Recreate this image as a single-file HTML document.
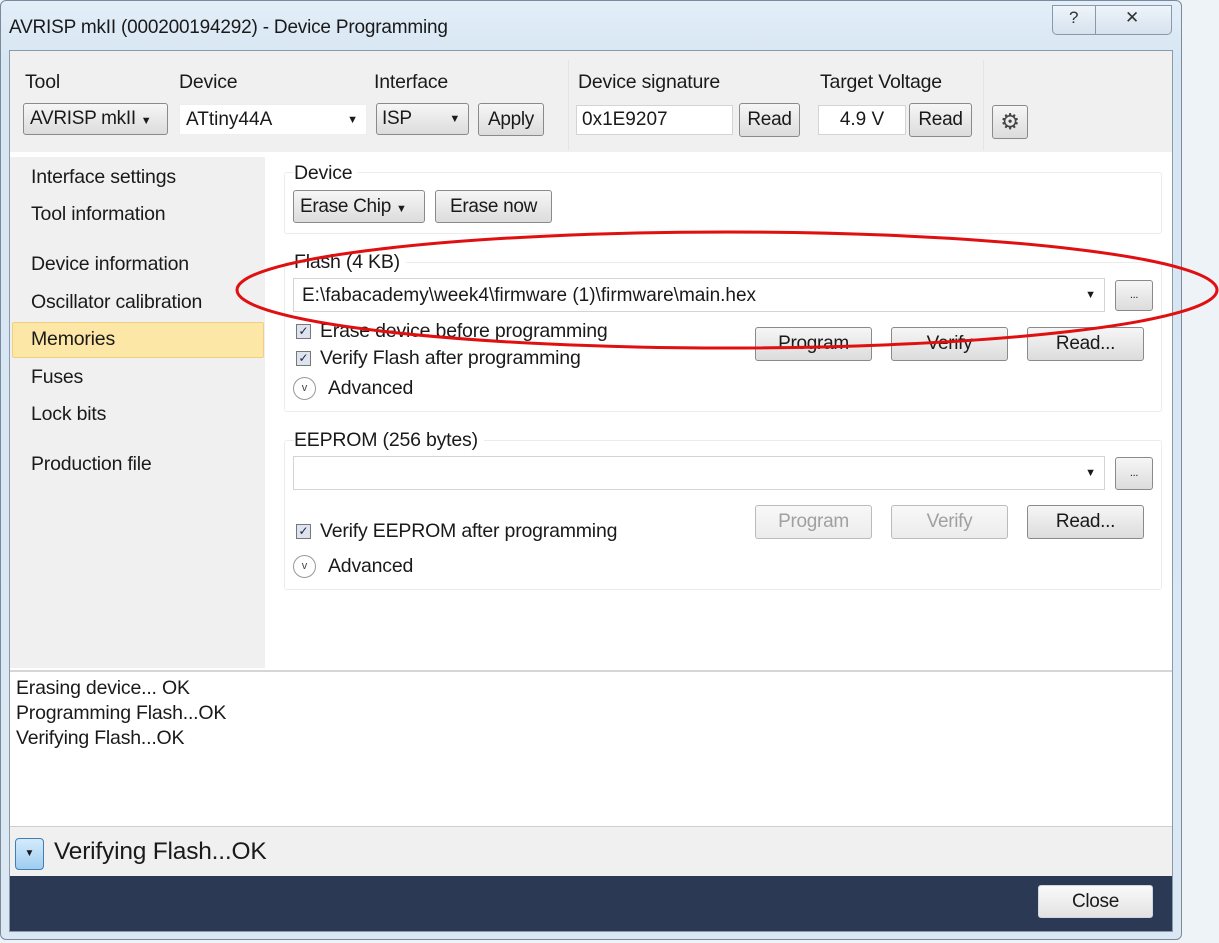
<!DOCTYPE html>
<html><head><meta charset="utf-8"><style>
*{box-sizing:border-box;margin:0;padding:0}
body{width:1219px;height:943px;overflow:hidden;background:#eef3f8;font-family:"Liberation Sans",sans-serif;color:#1a1a1a;position:relative;font-size:19.5px}
.a{position:absolute}
.t{position:absolute;white-space:nowrap;letter-spacing:-0.2px}
.btn{position:absolute;border:1px solid #8a8a8a;border-radius:3px;background:linear-gradient(#f6f6f6,#dcdcdc);font-size:19px;text-align:center;white-space:nowrap;letter-spacing:-0.3px}
.dis{color:#a0a0a0;border-color:#bbb;background:linear-gradient(#f8f8f8,#ececec)}
.inp{position:absolute;background:#fff;border:1px solid #d4d4d4;font-size:19px;white-space:nowrap}
.cb{position:absolute;width:15px;height:15px;border:1px solid #777;background:#dde4f0;font-size:12px;line-height:13px;text-align:center;color:#223}
.adv{position:absolute;width:23px;height:23px;border:1px solid #999;border-radius:50%;font-size:11px;text-align:center;line-height:21px;color:#444}
.grp{position:absolute;border:1px solid #ececec;border-radius:3px}
</style></head><body>
<div class="a" style="left:0;top:0;width:1182px;height:940px;border:1px solid #7a8a9a;border-radius:6px;background:linear-gradient(#e3eef8,#d7e6f3 60px,#dbe8f4)"></div>
<div class="t" style="left:9px;top:17px;font-size:19px">AVRISP mkII (000200194292) - Device Programming</div>
<div class="a" style="left:1052px;top:5px;width:120px;height:30px;border:1px solid #8a99aa;border-radius:0 0 5px 5px;background:linear-gradient(#eef4fa,#d6e2ee)"></div>
<div class="a" style="left:1095px;top:6px;width:1px;height:28px;background:#8a99aa"></div>
<div class="t" style="left:1069px;top:8px;font-size:17px;color:#333">?</div>
<div class="t" style="left:1125px;top:8px;font-size:17px;color:#333">✕</div>
<div class="a" style="left:9px;top:50px;width:1164px;height:882px;background:#fff;border:1px solid #8a9aaa"></div>
<div class="a" style="left:10px;top:51px;width:1162px;height:101px;background:#f0f0f0"></div>
<div class="t" style="left:25px;top:71px">Tool</div>
<div class="t" style="left:179px;top:71px">Device</div>
<div class="t" style="left:374px;top:71px">Interface</div>
<div class="t" style="left:578px;top:71px">Device signature</div>
<div class="t" style="left:820px;top:71px">Target Voltage</div>
<div class="a" style="left:983px;top:60px;width:1px;height:90px;background:#e4e4e4"></div>
<div class="a" style="left:568px;top:60px;width:1px;height:90px;background:#e4e4e4"></div>
<div class="btn" style="left:23px;top:103px;width:145px;height:32px;line-height:30px;text-align:left;padding-left:6px">AVRISP mkII <span style="font-size:11px">▼</span></div>
<div class="inp" style="left:179px;top:104px;width:188px;height:31px;line-height:30px;padding-left:6px;border-color:#eee">ATtiny44A<span style="position:absolute;right:8px;font-size:11px">▼</span></div>
<div class="btn" style="left:376px;top:103px;width:93px;height:32px;line-height:30px;text-align:left;padding-left:5px">ISP<span style="position:absolute;right:8px;font-size:11px">▼</span></div>
<div class="btn" style="left:478px;top:103px;width:66px;height:33px;line-height:31px">Apply</div>
<div class="inp" style="left:576px;top:105px;width:157px;height:30px;line-height:28px;padding-left:5px">0x1E9207</div>
<div class="btn" style="left:739px;top:103px;width:61px;height:34px;line-height:32px">Read</div>
<div class="inp" style="left:818px;top:105px;width:88px;height:30px;line-height:28px;text-align:center">4.9 V</div>
<div class="btn" style="left:909px;top:103px;width:63px;height:34px;line-height:32px">Read</div>
<div class="btn" style="left:992px;top:105px;width:36px;height:34px;line-height:32px;font-size:22px;color:#444">⚙</div>
<div class="a" style="left:10px;top:157px;width:255px;height:511px;background:#f0f0f0"></div>
<div class="a" style="left:12px;top:322px;width:252px;height:36px;background:#fde7a6;border:1px solid #f0d080;border-radius:2px"></div>
<div class="t" style="left:31px;top:166px">Interface settings</div>
<div class="t" style="left:31px;top:203px">Tool information</div>
<div class="t" style="left:31px;top:253px">Device information</div>
<div class="t" style="left:31px;top:291px">Oscillator calibration</div>
<div class="t" style="left:31px;top:328px">Memories</div>
<div class="t" style="left:31px;top:366px">Fuses</div>
<div class="t" style="left:31px;top:403px">Lock bits</div>
<div class="t" style="left:31px;top:453px">Production file</div>
<div class="grp" style="left:284px;top:172px;width:878px;height:62px"></div>
<div class="t" style="left:294px;top:162px;background:#fff;padding-right:6px">Device</div>
<div class="btn" style="left:293px;top:190px;width:132px;height:33px;line-height:31px;text-align:left;padding-left:6px">Erase Chip <span style="font-size:11px">▼</span></div>
<div class="btn" style="left:435px;top:190px;width:117px;height:33px;line-height:31px">Erase now</div>
<div class="grp" style="left:284px;top:262px;width:878px;height:150px"></div>
<div class="t" style="left:294px;top:251px;background:#fff;padding-right:6px">Flash (4 KB)</div>
<div class="inp" style="left:293px;top:278px;width:812px;height:34px;line-height:33px;padding-left:8px">E:\fabacademy\week4\firmware (1)\firmware\main.hex<span style="position:absolute;right:8px;font-size:11px">▼</span></div>
<div class="btn" style="left:1115px;top:280px;width:38px;height:31px;line-height:28px;font-size:11px">...</div>
<div class="cb" style="left:296px;top:324px">✓</div>
<div class="t" style="left:320px;top:320px">Erase device before programming</div>
<div class="cb" style="left:296px;top:351px">✓</div>
<div class="t" style="left:320px;top:347px">Verify Flash after programming</div>
<div class="adv" style="left:293px;top:377px">v</div>
<div class="t" style="left:328px;top:377px">Advanced</div>
<div class="btn" style="left:755px;top:327px;width:117px;height:34px;line-height:32px">Program</div>
<div class="btn" style="left:891px;top:327px;width:117px;height:34px;line-height:32px">Verify</div>
<div class="btn" style="left:1027px;top:327px;width:117px;height:34px;line-height:32px">Read...</div>
<div class="grp" style="left:284px;top:440px;width:878px;height:150px"></div>
<div class="t" style="left:294px;top:429px;background:#fff;padding-right:6px">EEPROM (256 bytes)</div>
<div class="inp" style="left:293px;top:456px;width:812px;height:34px"><span style="position:absolute;right:8px;top:10px;font-size:11px">▼</span></div>
<div class="btn" style="left:1115px;top:457px;width:38px;height:33px;line-height:30px;font-size:11px">...</div>
<div class="btn dis" style="left:755px;top:505px;width:117px;height:34px;line-height:32px">Program</div>
<div class="btn dis" style="left:891px;top:505px;width:117px;height:34px;line-height:32px">Verify</div>
<div class="btn" style="left:1027px;top:505px;width:117px;height:34px;line-height:32px">Read...</div>
<div class="cb" style="left:296px;top:524px">✓</div>
<div class="t" style="left:320px;top:520px">Verify EEPROM after programming</div>
<div class="adv" style="left:293px;top:555px">v</div>
<div class="t" style="left:328px;top:555px">Advanced</div>
<div class="a" style="left:10px;top:670px;width:1162px;height:2px;background:#d6d6d6"></div>
<div class="t" style="left:16px;top:676px;font-size:19.5px;line-height:25px">Erasing device... OK<br>Programming Flash...OK<br>Verifying Flash...OK</div>
<div class="a" style="left:10px;top:826px;width:1162px;height:50px;background:#f0f0f0;border-top:1px solid #cfcfcf"></div>
<div class="a" style="left:15px;top:838px;width:29px;height:32px;border:1px solid #3f7fb5;border-radius:4px;background:linear-gradient(#d4ebfb,#9fcdf0);font-size:10px;text-align:center;line-height:30px">▼</div>
<div class="t" style="left:54px;top:838px;font-size:24.5px">Verifying Flash...OK</div>
<div class="a" style="left:10px;top:876px;width:1162px;height:55px;background:#2b3955"></div>
<div class="btn" style="left:1038px;top:885px;width:115px;height:33px;line-height:31px;border-color:#cfd6e0;background:linear-gradient(#fafafa,#e2e2e2)">Close</div>
<svg class="a" style="left:0;top:0" width="1219" height="943"><ellipse cx="727" cy="290" rx="490" ry="58" fill="none" stroke="#e01010" stroke-width="3"/></svg>
</body></html>
